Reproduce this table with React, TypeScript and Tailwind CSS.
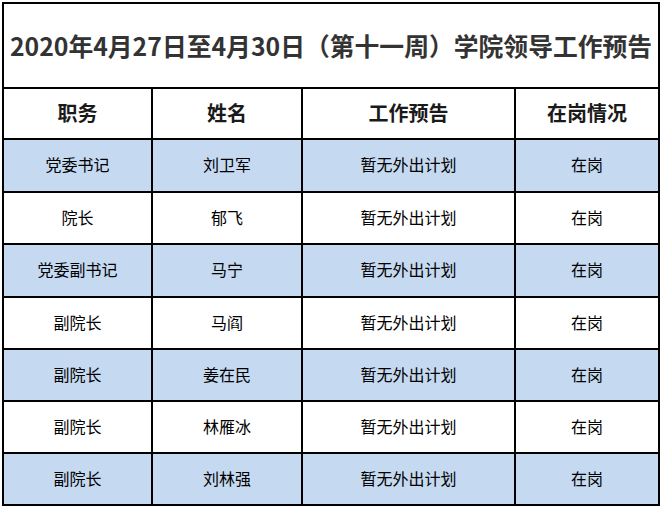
import React from "react";

const rows: [string, string, string, string][] = [
  ["党委书记", "刘卫军", "暂无外出计划", "在岗"],
  ["院长", "郁飞", "暂无外出计划", "在岗"],
  ["党委副书记", "马宁", "暂无外出计划", "在岗"],
  ["副院长", "马阎", "暂无外出计划", "在岗"],
  ["副院长", "姜在民", "暂无外出计划", "在岗"],
  ["副院长", "林雁冰", "暂无外出计划", "在岗"],
  ["副院长", "刘林强", "暂无外出计划", "在岗"],
];

const heights = ["h-[53px]", "h-[52px]", "h-[53px]", "h-[52px]", "h-[52px]", "h-[52px]", "h-[52px]"];
const widths = ["w-[149px]", "w-[150px]", "w-[213px]", "w-[144px]"];

export default function App() {
  return (
    <div
      className="w-[663px] h-[509px] bg-white pt-[2px] pl-[2px]"
      style={{ fontFamily: '"Noto Sans CJK SC", "Noto Sans", sans-serif' }}
    >
      <div className="w-[658px] border-l-2 border-t-2 border-black flex flex-col">
        <div className="h-[85px] border-r-2 border-b-2 border-black flex items-center justify-center text-[24.8px] font-bold text-[#333333] leading-none">
          2020年4月27日至4月30日（第十一周）学院领导工作预告
        </div>
        <div className="flex h-[51px]">
          {["职务", "姓名", "工作预告", "在岗情况"].map((h, i) => (
            <div
              key={h}
              className={`${widths[i]} border-r-2 border-b-2 border-black flex items-center justify-center pb-[2px] text-[20px] font-bold text-[#1a1a1a] leading-none`}
            >
              {h}
            </div>
          ))}
        </div>
        {rows.map((r, ri) => (
          <div key={ri} className={`flex ${heights[ri]} ${ri % 2 === 0 ? "bg-[#c5d9f1]" : "bg-white"}`}>
            {r.map((c, ci) => (
              <div
                key={ci}
                className={`${widths[ci]} border-r-2 border-b-2 border-black flex items-center justify-center pb-[3px] text-[16px] text-black leading-none`}
              >
                {c}
              </div>
            ))}
          </div>
        ))}
      </div>
    </div>
  );
}
